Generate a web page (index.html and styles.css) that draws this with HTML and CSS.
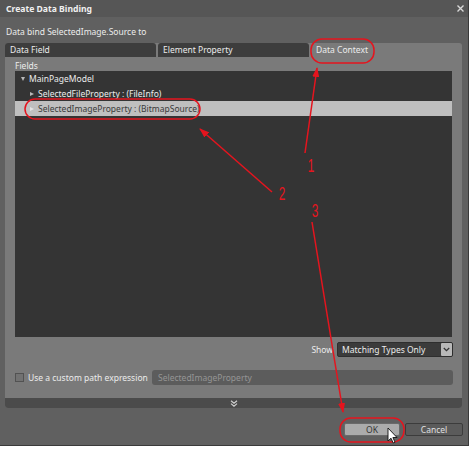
FILE: index.html
```html
<!DOCTYPE html>
<html lang="en">
<head>
    <meta charset="UTF-8">
    <title>Create Data Binding</title>
    <link rel="stylesheet" href="styles.css">
</head>
<body>
    <div class="dialog">
        <div class="titlebar">
            <span class="title">Create Data Binding</span>
            <svg class="close" width="7" height="7" viewBox="0 0 7 7">
                <path d="M0.5 0.5 L6.5 6.5 M6.5 0.5 L0.5 6.5" stroke="#d8d8d8" stroke-width="1.4"/>
            </svg>
        </div>

        <div class="subtitle">Data bind SelectedImage.Source to</div>

        <div class="panel">
            <div class="tabs">
                <div class="tab">Data Field</div>
                <div class="tab">Element Property</div>
                <div class="tab active">Data Context</div>
            </div>

            <div class="panel-body">
                <div class="fields-label">Fields</div>

                <div class="tree">
                    <div class="row"><span class="toggle open"></span>MainPageModel</div>
                    <div class="row child"><span class="toggle"></span>SelectedFileProperty : (FileInfo)</div>
                    <div class="row child selected"><span class="toggle"></span>SelectedImageProperty : (BitmapSource)</div>
                </div>

                <div class="show-row">
                    <span class="show-label">Show</span>
                    <div class="select">
                        <span class="select-text">Matching Types Only</span>
                        <span class="select-btn">
                            <svg width="7" height="5" viewBox="0 0 7 5">
                                <path d="M0.8 1 L3.5 3.6 L6.2 1" fill="none" stroke="#333" stroke-width="1.3"/>
                            </svg>
                        </span>
                    </div>
                </div>

                <div class="path-row">
                    <span class="checkbox"></span>
                    <span class="path-label">Use a custom path expression</span>
                    <div class="path-input">SelectedImageProperty</div>
                </div>
            </div>

            <div class="expander">
                <svg width="8" height="7" viewBox="0 0 8 7">
                    <path d="M1 0.8 L4 3.3 L7 0.8 M1 3.6 L4 6.1 L7 3.6" fill="none" stroke="#d0d0d0" stroke-width="1.2"/>
                </svg>
            </div>
        </div>

        <div class="buttons">
            <button class="btn ok">OK</button>
            <button class="btn cancel">Cancel</button>
        </div>
    </div>

    <!-- callouts drawn over the dialog -->
    <svg class="callouts" width="473" height="450" viewBox="0 0 473 450">
        <defs>
            <marker id="head" markerWidth="10" markerHeight="7" refX="9" refY="3.5" orient="auto" markerUnits="userSpaceOnUse">
                <path d="M0 0 L10 3.5 L0 7 Z" fill="#e5141e"/>
            </marker>
        </defs>
        <g fill="none" stroke="#e5141e" stroke-width="1.5">
            <rect x="311" y="39" width="63" height="24" rx="11"/>
            <rect x="25" y="99" width="175" height="20" rx="10"/>
            <rect x="340" y="418" width="64" height="24" rx="11"/>
            <line x1="305" y1="153" x2="317" y2="68" marker-end="url(#head)"/>
            <line x1="272" y1="192" x2="200" y2="129" marker-end="url(#head)"/>
            <line x1="312" y1="222" x2="343" y2="412" marker-end="url(#head)"/>
        </g>
        <g class="num" fill="#e5141e">
            <text transform="translate(311 172) scale(0.62 1)">1</text>
            <text transform="translate(282 200) scale(0.62 1)">2</text>
            <text transform="translate(315 217) scale(0.62 1)">3</text>
        </g>
        <path transform="translate(388 428)" d="M0 0 L0 13 L3 10.2 L5.2 15 L7 14.2 L4.9 9.5 L9 9.5 Z" fill="#fff" stroke="#111" stroke-width="0.9" stroke-linejoin="round"/>
    </svg>
</body>
</html>
```

FILE: styles.css
```css
:root {
    --dialog-bg: #606060;
    --title-bg: #565656;
    --panel-bg: #7a7a7a;
    --dark-bg: #343434;
    --tab-bg: #3d3d3d;
    --text-color: #ececec;
}

* {
    margin: 0;
    padding: 0;
    box-sizing: border-box;
}

body {
    background-color: #fff;
    font-family: "Noto Sans", "Open Sans", sans-serif;
    font-size: 8.5px;
    color: var(--text-color);
    position: relative;
}

.dialog {
    width: 469px;
    height: 446px;
    background-color: var(--dialog-bg);
    border-right: 1px solid #3a3a3a;
    border-bottom: 1px solid #3a3a3a;
    display: flex;
    flex-direction: column;
}

.titlebar {
    height: 17px;
    background-color: var(--title-bg);
    display: flex;
    align-items: center;
    justify-content: space-between;
    padding: 0 4px 0 6px;
}

.title {
    font-weight: bold;
    font-size: 8.6px;
    color: #f0f0f0;
}

.subtitle {
    height: 26px;
    padding: 9px 6px 0;
    line-height: 12px;
}

/* tabbed panel */
.panel {
    width: 457px;
    height: 365px;
    margin-left: 5px;
    background-color: var(--panel-bg);
    border-radius: 3px;
    display: flex;
    flex-direction: column;
}

.tabs {
    display: flex;
    gap: 2px;
    height: 14px;
}

.tab {
    width: 151px;
    background-color: var(--tab-bg);
    border-radius: 3px 3px 0 0;
    padding-left: 5px;
    line-height: 14px;
}

.tab.active {
    background: none;
    width: auto;
}

.panel-body {
    flex: 1;
    padding: 0 10px;
    display: flex;
    flex-direction: column;
}

.fields-label {
    padding-top: 3px;
    line-height: 11px;
}

.tree {
    height: 266px;
    background-color: var(--dark-bg);
}

.row {
    height: 15px;
    line-height: 15px;
    display: flex;
    align-items: center;
    padding-left: 6px;
}

.row.child {
    padding-left: 15px;
}

.row.selected {
    background-color: #bfbfbf;
    color: #3a3a3a;
}

.toggle {
    width: 0;
    height: 0;
    border-top: 2.5px solid transparent;
    border-bottom: 2.5px solid transparent;
    border-left: 4px solid #b8b8b8;
    margin-right: 4px;
}

.toggle.open {
    border-left: 2.5px solid transparent;
    border-right: 2.5px solid transparent;
    border-top: 4px solid #b8b8b8;
    border-bottom: none;
    margin-right: 4px;
}

.row.selected .toggle {
    border-left-color: #e4e4e4;
}

.show-row {
    margin-top: 5px;
    height: 15px;
    display: flex;
    justify-content: flex-end;
    align-items: center;
    gap: 4px;
}

.select {
    width: 116px;
    height: 15px;
    margin-right: -1px;
    background-color: #3b3b3b;
    border: 1px solid #2e2e2e;
    border-radius: 2px;
    display: flex;
    align-items: center;
    justify-content: space-between;
    padding-left: 4px;
}

.select-btn {
    width: 11px;
    height: 13px;
    background-color: #b9b9b9;
    border-radius: 1px;
    display: flex;
    align-items: center;
    justify-content: center;
}

.path-row {
    margin-top: 13px;
    height: 15px;
    display: flex;
    align-items: center;
}

.checkbox {
    width: 9px;
    height: 9px;
    border: 1px solid #525252;
    background-color: #727272;
    margin-right: 4px;
}

.path-label {
    width: 124px;
}

.path-input {
    flex: 1;
    height: 15px;
    margin-right: -1px;
    background-color: #5c5c5c;
    border-radius: 3px;
    color: #959595;
    padding-left: 6px;
    line-height: 15px;
}

.expander {
    height: 10px;
    background-color: #4b4b4b;
    border-radius: 0 0 3px 3px;
    display: flex;
    align-items: center;
    justify-content: center;
}

.buttons {
    margin-top: 15px;
    padding-right: 5px;
    display: flex;
    justify-content: flex-end;
    gap: 5px;
}

.btn {
    height: 13px;
    font-family: inherit;
    font-size: 8.5px;
    border-radius: 2px;
    line-height: 11px;
}

.btn.ok {
    width: 56px;
    background-color: #ababab;
    border: 1px solid #6a6a6a;
    color: #333;
}

.btn.cancel {
    width: 58px;
    background-color: #5b5b5b;
    border: 1px solid #3c3c3c;
    color: #e0e0e0;
}

.callouts {
    position: absolute;
    left: 0;
    top: 0;
    pointer-events: none;
}

.num text {
    font-family: "Liberation Sans", sans-serif;
    font-size: 19px;
    text-anchor: middle;
}
```
